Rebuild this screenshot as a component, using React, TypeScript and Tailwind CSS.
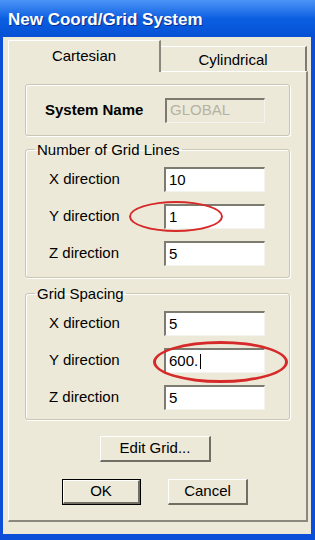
import React from 'react';

type RowProps = { label: string; value: string; ring?: 'small' | 'large'; cursor?: boolean };

function Field({ value, cursor, dim }: { value: string; cursor?: boolean; dim?: boolean }) {
  return (
    <div
      className={`h-[25px] flex items-center pl-[3px] border-t-2 border-l-2 border-t-[#7d7b70] border-l-[#7d7b70] border-r border-b border-r-[#f4f3ee] border-b-[#f4f3ee] text-[15px] ${
        dim ? 'bg-[#ece9d8] text-[#b5b2a4]' : 'bg-white text-black'
      }`}
    >
      {value}
      {cursor && <span className="inline-block w-[1px] h-[15px] bg-black ml-[2px]" />}
    </div>
  );
}

function Row({ label, value, ring, cursor }: RowProps) {
  return (
    <div className="grid grid-cols-[138px_101px] items-center">
      <span className="pl-[23px] text-[15px] text-black">{label}</span>
      <div className="relative">
        <Field value={value} cursor={cursor} />
        {ring === 'small' && (
          <div className="absolute left-[-35px] top-[-3px] w-[94px] h-[31px] rounded-[50%] border-2 border-[#d62a2a] pointer-events-none" />
        )}
        {ring === 'large' && (
          <div className="absolute left-[-11px] top-[-7px] w-[135px] h-[42px] rounded-[50%] border-[3px] border-[#d62a2a] pointer-events-none" />
        )}
      </div>
    </div>
  );
}

function Group({ title, children, className }: { title: string; children: React.ReactNode; className?: string }) {
  return (
    <fieldset
      className={`w-[265px] border border-[#c9c6b6] rounded-[3px] shadow-[inset_1px_1px_0_#fff,1px_1px_0_#fff] ${className ?? ''}`}
    >
      <legend className="ml-[9px] px-[2px] text-[15px] leading-[17px] text-black">{title}</legend>
      {children}
    </fieldset>
  );
}

function Button({ children, className, isDefault }: { children: React.ReactNode; className?: string; isDefault?: boolean }) {
  return (
    <div className={`h-[26px] ${isDefault ? 'border border-black' : ''} ${className ?? ''}`}>
      <div className="h-full flex items-center justify-center bg-[#ece9d8] border-t border-l border-white border-r-2 border-b-2 border-r-[#716f64] border-b-[#716f64] text-[15px] text-black">
        {children}
      </div>
    </div>
  );
}

export default function App() {
  return (
    <div className="w-[315px] h-[540px] bg-[#0b4fd8] flex flex-col font-['Liberation_Sans',Arial,sans-serif]">
      {/* Title bar */}
      <div className="h-[37px] shrink-0 bg-gradient-to-b from-[#4a94f7] via-[#0c5fe2] to-[#0650d4] flex items-center px-[8px] pt-[3px]">
        <span className="text-white font-bold text-[17px] [text-shadow:1px_1px_0_#0b2d8a]">
          New Coord/Grid System
        </span>
      </div>

      {/* Body */}
      <div className="flex-1 ml-[3px] mr-[4px] mb-[6px] bg-[#ece9d8] flex flex-col pt-[3px] pl-[5px] pr-[3px] pb-[12px]">
        {/* Tabs */}
        <div className="flex h-[31px] shrink-0">
          <div className="relative z-10 w-[153px] h-[32px] bg-[#ece9d8] border-t border-l border-white border-r-2 border-r-[#8a887c] flex justify-center pt-[4px] text-[15px] text-black">
            Cartesian
          </div>
          <div className="w-[146px] mt-[6px] h-[25px] bg-[#ece9d8] border-t border-white border-r-2 border-r-[#7d7b70] flex justify-center items-center pt-[2px] text-[15px] text-black">
            Cylindrical
          </div>
        </div>

        {/* Panel */}
        <div className="flex-1 border-t border-l border-white border-r-2 border-b-2 border-r-[#8a887c] border-b-[#8a887c] pt-[12px] pl-[16px] flex flex-col">
          <div className="w-[265px] h-[52px] border border-[#c9c6b6] rounded-[3px] shadow-[inset_1px_1px_0_#fff,1px_1px_0_#fff] grid grid-cols-[139px_100px] items-center">
            <span className="pl-[19px] font-bold text-[15px] text-black">System Name</span>
            <Field value="GLOBAL" dim />
          </div>

          <Group title="Number of Grid Lines" className="mt-[5px] pt-[9px] pb-[11px]">
            <div className="flex flex-col gap-[12px]">
              <Row label="X direction" value="10" />
              <Row label="Y direction" value="1" ring="small" />
              <Row label="Z direction" value="5" />
            </div>
          </Group>

          <Group title="Grid Spacing" className="mt-[7px] pt-[9px] pb-[9px]">
            <div className="flex flex-col gap-[12px]">
              <Row label="X direction" value="5" />
              <Row label="Y direction" value="600." ring="large" cursor />
              <Row label="Z direction" value="5" />
            </div>
          </Group>

          <Button className="mt-[16px] ml-[75px] w-[111px]">Edit Grid...</Button>

          <div className="flex mt-[17px] ml-[37px] gap-[27px]">
            <Button className="w-[79px]" isDefault>
              OK
            </Button>
            <Button className="w-[80px]">Cancel</Button>
          </div>
        </div>
      </div>
    </div>
  );
}
